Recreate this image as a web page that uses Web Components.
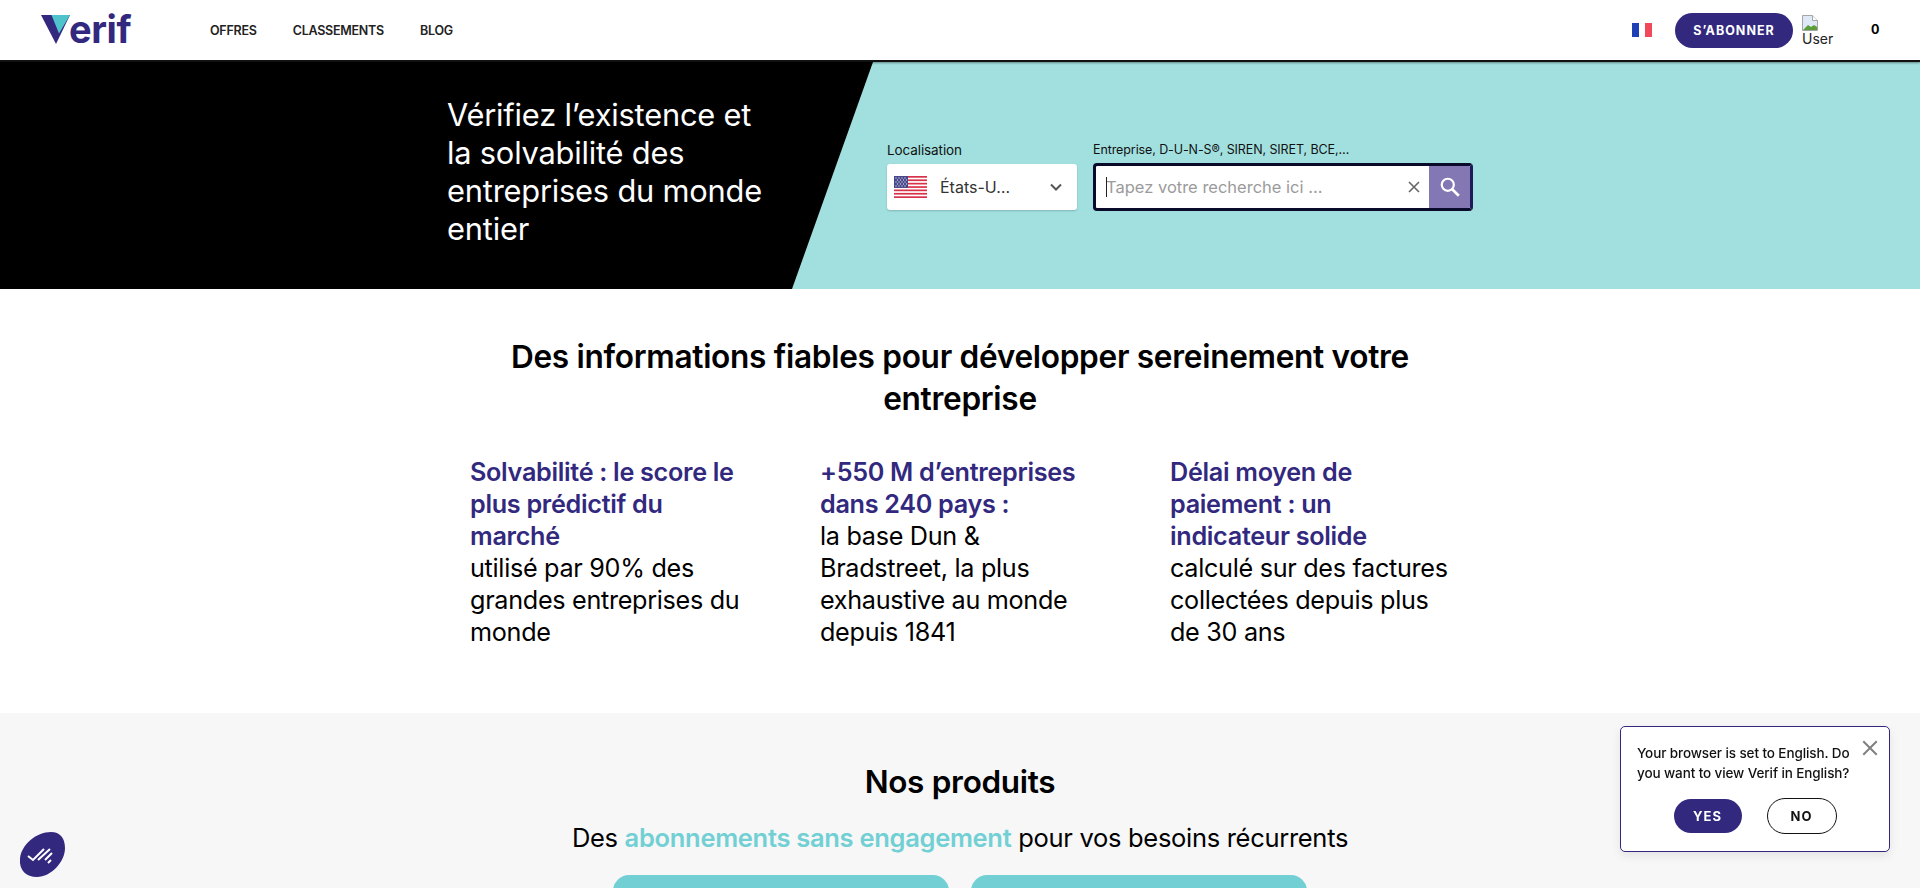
<!DOCTYPE html>
<html lang="fr"><head><meta charset="utf-8"><title>Verif</title>
<style>
html,body{margin:0;height:888px;overflow:hidden;background:#fff}
body{font-family:Inter,"Liberation Sans",sans-serif;color:#000}
</style></head><body>
<v-header></v-header>
<v-hero></v-hero>
<v-features></v-features>
<v-products></v-products>
<v-chat></v-chat>
<v-lang></v-lang>
<script>
const def=(name,html)=>customElements.define(name,class extends HTMLElement{constructor(){super();this.attachShadow({mode:'open'}).innerHTML=html}});
const btnCss=`.btn{display:inline-flex;align-items:center;justify-content:center;border-radius:20px;font:700 13px Inter,sans-serif;letter-spacing:1px}`;
def('v-header',`<style>
:host{display:flex;align-items:center;height:62px;box-sizing:border-box;padding:0 0 0 41px;background:#fff;border-bottom:2px solid #111;box-shadow:0 1px 2px rgba(0,0,0,.4);position:relative;z-index:2;font-family:Inter,sans-serif}
.logo{display:flex;width:92px;height:32px;overflow:visible;margin-top:-1px}
nav{display:flex;gap:36px;margin-left:77px;font-size:12.5px;font-weight:600;color:#222;letter-spacing:-.25px}
.r{margin-left:auto;display:flex;align-items:center}
.fr{display:flex;width:20px;height:14px;margin-right:23px}
.fr i{flex:1}
.btn{background:#32297f;color:#fff;width:118px;height:35px;border-radius:18px;font:700 12.5px Inter,sans-serif;letter-spacing:1px;display:flex;align-items:center;justify-content:center}
.u{width:30px;height:33px;margin-left:9px;font:14px/16px Inter,sans-serif;color:#222;display:flex;flex-direction:column;margin-top:2px}
.u svg{flex:none;display:block}
.c{width:88px;padding-left:39px;box-sizing:border-box;font:700 12.5px Inter,sans-serif;margin-top:-2px}
</style>
<svg class="logo" viewBox="0 0 92 32"><path d="M0 1h29L15 30z" fill="#32297f"/><path d="M10.500 1H29L18 19.500z" fill="#4fc3cc"/><text x="28" y="29" font-family="Inter,sans-serif" font-weight="700" font-size="38" letter-spacing="-.4" fill="#32297f">erif</text></svg>
<nav><span>OFFRES</span><span>CLASSEMENTS</span><span>BLOG</span></nav>
<div class="r"><div class="fr"><i style="background:#1f3fb5"></i><i style="background:#fff"></i><i style="background:#f04a5a"></i></div><div class="btn">S’ABONNER</div>
<div class="u"><svg width="16" height="16" viewBox="0 0 16 16"><path d="M.5.5h10l5 5v10H.5z" fill="#dfe8f6" stroke="#a5a5a5"/><path d="M1 15l5-5 3 2 3-2 3 2v3z" fill="#5a9e3a"/><path d="M10.500.5v5h5" fill="#fff" stroke="#a5a5a5"/></svg><span>User</span></div>
<div class="c">0</div></div>`);
def('v-hero',`<style>
:host{display:block;height:227px;background:#a2e0e0;position:relative;overflow:hidden;font-family:Inter,sans-serif}
:host::before{content:"";position:absolute;inset:0;background:#000;clip-path:polygon(0 0,873px 0,792px 100%,0 100%)}
.in{position:relative;display:flex;height:100%;padding-left:447px;box-sizing:border-box;align-items:flex-start}
h1{margin:34px 0 0;width:440px;font-weight:400;font-size:30.8px;line-height:38px;color:#fff;letter-spacing:-.2px}
.f{display:flex;gap:16px;margin-top:79px}
label{display:block;font-size:13.5px;line-height:18px;height:22px;color:#111;letter-spacing:-.1px}
label.e{font-size:12.5px}
.sel{width:190px;height:46px;box-sizing:border-box;background:#fff;border-radius:3px;display:flex;align-items:center;padding:0 14px 0 7px;box-shadow:0 1px 2px rgba(0,0,0,.2);font-size:16px;color:#333;margin-top:1px}
.sel span{margin-left:13px;flex:1}
.s{width:380px;height:48px;box-sizing:border-box;border:3px solid #0a0a2a;border-radius:4px;background:#fff;display:flex;align-items:center;overflow:hidden;border-right-color:#1f1a5a;border-top-color:#0a0a2a}
.ph{flex:1;font-size:16.500px;color:#9b9b9b;padding-left:10px;border:0;position:relative;white-space:nowrap}
.ph::before{content:"";position:absolute;left:10px;top:0;bottom:0;width:1px;background:#222}
.x{margin-right:8px;display:flex}
.go{width:41px;height:100%;background:#8478b4;display:flex;align-items:center;justify-content:center}
</style>
<div class="in"><h1>Vérifiez l’existence et<br>la solvabilité des<br>entreprises du monde<br>entier</h1>
<div class="f"><div><label>Localisation</label><div class="sel">
<svg width="33" height="22" viewBox="0 0 33 22"><rect width="33" height="22" fill="#fff"/><g fill="#d8324a"><rect width="33" height="1.700"/><rect y="3.400" width="33" height="1.700"/><rect y="6.800" width="33" height="1.700"/><rect y="10.200" width="33" height="1.700"/><rect y="13.500" width="33" height="1.700"/><rect y="16.900" width="33" height="1.700"/><rect y="20.300" width="33" height="1.700"/></g><rect width="14" height="11.900" fill="#47478a"/><g fill="#cfd0e8"><circle cx="2" cy="2" r=".7"/><circle cx="5" cy="2" r=".7"/><circle cx="8" cy="2" r=".7"/><circle cx="11" cy="2" r=".7"/><circle cx="3.500" cy="4" r=".7"/><circle cx="6.500" cy="4" r=".7"/><circle cx="9.500" cy="4" r=".7"/><circle cx="12.500" cy="4" r=".7"/><circle cx="2" cy="6" r=".7"/><circle cx="5" cy="6" r=".7"/><circle cx="8" cy="6" r=".7"/><circle cx="11" cy="6" r=".7"/><circle cx="3.500" cy="8" r=".7"/><circle cx="6.500" cy="8" r=".7"/><circle cx="9.500" cy="8" r=".7"/><circle cx="12.500" cy="8" r=".7"/><circle cx="2" cy="10" r=".7"/><circle cx="5" cy="10" r=".7"/><circle cx="8" cy="10" r=".7"/><circle cx="11" cy="10" r=".7"/></g></svg>
<span>États-U…</span><svg width="14" height="9" viewBox="0 0 14 9"><path d="M2 1.500l5 5 5-5" fill="none" stroke="#555" stroke-width="2"/></svg></div></div>
<div><label class="e">Entreprise, D-U-N-S®, SIREN, SIRET, BCE,…</label><div class="s"><div class="ph">Tapez votre recherche ici …</div>
<svg class="x" width="14" height="14" viewBox="0 0 14 14"><path d="M2 2l10 10M12 2L2 12" stroke="#666" stroke-width="1.600"/></svg>
<div class="go"><svg width="22" height="22" viewBox="0 0 20 20"><circle cx="8" cy="8" r="5.500" fill="none" stroke="#fff" stroke-width="2"/><path d="M12 12l6 6" stroke="#fff" stroke-width="2.400"/></svg></div></div></div></div></div>`);
def('v-feature',`<style>
:host{display:block;width:350px;box-sizing:border-box;padding-right:66px;font:400 25.200px/32px Inter,sans-serif;letter-spacing:-.3px}
b{display:block;font-weight:600;color:#32297f;font-size:25.200px}
</style><b><slot name="t"></slot></b><slot></slot>`);
def('v-features',`<style>
:host{display:block;height:424px;background:#fff;text-align:center;box-sizing:border-box;padding-top:47px;font-family:Inter,sans-serif}
h2{margin:0 auto;width:960px;font-size:31.600px;line-height:42px;font-weight:600;letter-spacing:-.3px}
.g{display:flex;justify-content:center;text-align:left;margin-top:36px;padding-left:70px}
</style><h2>Des informations fiables pour développer sereinement votre entreprise</h2>
<div class="g"><v-feature><span slot="t">Solvabilité : le score le plus prédictif du marché</span>utilisé par 90% des grandes entreprises du monde</v-feature>
<v-feature><span slot="t">+550 M d’entreprises dans 240 pays :</span>la base Dun &amp; Bradstreet, la plus exhaustive au monde depuis 1841</v-feature>
<v-feature><span slot="t">Délai moyen de paiement : un indicateur solide</span>calculé sur des factures collectées depuis plus de 30 ans</v-feature></div>`);
def('v-products',`<style>
:host{display:block;height:175px;overflow:hidden;background:#f7f7f8;text-align:center;box-sizing:border-box;padding-top:47px;font-family:Inter,sans-serif}
h2{margin:0;font-size:31.500px;line-height:43px;font-weight:600;letter-spacing:-.3px}
p{margin:18px 0 0;font-size:25.500px;line-height:34px;letter-spacing:-.3px}
em{font-style:normal;font-weight:600;color:#72d0d4}
.c{display:flex;justify-content:center;gap:22px;margin-top:20px}
.c i{display:block;width:336px;height:40px;background:#72d0d4;border-radius:16px 16px 0 0}
</style><h2>Nos produits</h2><p>Des <em>abonnements sans engagement</em> pour vos besoins récurrents</p><div class="c"><i></i><i></i></div>`);
def('v-chat',`<style>:host{position:fixed;left:18px;top:832px;width:48px;height:46px}</style>
<svg width="48" height="46" viewBox="0 0 48 46"><path d="M2 27C3 13 18 0 33 0c9 0 14 6 14 16 0 14-14 29-28 29C8 45 1 38 2 27z" fill="#32297f"/><path d="M10 24l5 4 11-11M20 28l12-11M27 28l7-7M30 31l3-3" fill="none" stroke="#fff" stroke-width="2"/></svg>`);
def('v-lang',`<style>${btnCss}
:host{position:fixed;left:1620px;top:726px;width:270px;height:126px;box-sizing:border-box;background:#fff;border:1px solid #32297f;border-radius:5px;box-shadow:0 4px 10px rgba(0,0,0,.08);padding:16px 16px 0;font-family:Inter,sans-serif}
p{margin:0;font-size:13.500px;line-height:20px;font-weight:500;color:#111;letter-spacing:-.1px;width:225px}
.x{position:absolute;right:10px;top:12px}
.b{display:flex;gap:25px;justify-content:center;margin-top:16px}
.y{width:68px;height:34px;background:#32297f;color:#fff}
.n{width:70px;height:36px;box-sizing:border-box;border:1px solid #111;color:#111;margin-top:-1px}
</style><p>Your browser is set to English. Do you want to view Verif in English?</p>
<svg class="x" width="18" height="18" viewBox="0 0 16 16"><path d="M2 2l12 12M14 2L2 14" stroke="#808080" stroke-width="1.800"/></svg>
<div class="b"><div class="btn y">YES</div><div class="btn n">NO</div></div>`);
</script></body></html>
